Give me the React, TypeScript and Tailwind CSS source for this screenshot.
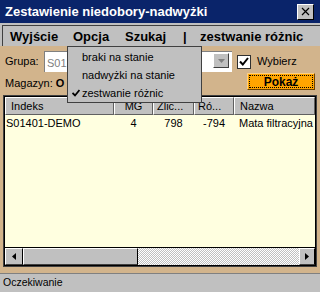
import React from "react";

const cols = [
  { w: "w-[109px]", label: "Indeks", align: "justify-start pl-[5px]" },
  { w: "w-[39px]", label: "MG", align: "justify-center" },
  { w: "w-[41px]", label: "Zlic...", align: "justify-start pl-[3px]" },
  { w: "w-[40px]", label: "Ró...", align: "justify-start pl-[3px]" },
  { w: "flex-1", label: "Nazwa", align: "justify-start pl-[5px]" },
];

export default function App() {
  return (
    <div className="w-[320px] h-[295px] flex flex-col bg-white overflow-hidden relative font-['Liberation_Sans',Arial,sans-serif] text-black">
      {/* Title bar */}
      <div className="h-[23px] shrink-0 bg-[#0a246a] flex items-center pl-[5px] pr-[6px]">
        <span className="flex-1 text-white font-bold text-[13px] leading-none whitespace-nowrap">
          Zestawienie niedobory-nadwyżki
        </span>
        <div className="w-[17px] h-[16px] bg-[#c0c0c0] border border-t-white border-l-white border-r-black border-b-black flex items-center justify-center">
          <svg width="9" height="9" viewBox="0 0 9 9">
            <path d="M1 1 L8 8 M8 1 L1 8" stroke="#000" strokeWidth="1.2" />
          </svg>
        </div>
      </div>

      {/* Menu bar */}
      <div className="h-[23px] shrink-0 bg-[#c0c0c0] pt-[2px] pl-[2px]">
        <div className="h-full border-t border-l border-[#404040] flex items-center text-[13px] font-bold leading-none whitespace-nowrap pl-[7px]">
          <span className="w-[63px]">Wyjście</span>
          <span className="w-[52px]">Opcja</span>
          <span className="w-[58px]">Szukaj</span>
          <span className="w-[17px]">|</span>
          <span>zestwanie różnic</span>
        </div>
      </div>

      {/* Body */}
      <div className="h-[227px] shrink-0 bg-[#d2b48c] flex flex-col px-[3px] text-[11px]">
        {/* Row 1 */}
        <div className="mt-[5px] h-[21px] flex items-center">
          <span className="w-[41px] pl-[2px]">Grupa:</span>
          <div className="w-[188px] h-[21px] bg-white border-l border-t border-[#808080] flex items-start pr-[3px]">
            <span className="flex-1 pl-[2px] pt-[3px] text-[#808080]">S01</span>
            <div className="mt-[1px] w-[16px] h-[15px] bg-[#c0c0c0] border border-t-white border-l-white border-r-[#404040] border-b-[#404040] flex items-center justify-center">
              <svg width="7" height="4" viewBox="0 0 7 4">
                <path d="M0 0 L7 0 L3.5 4 Z" fill="#808080" />
              </svg>
            </div>
          </div>
          <div className="ml-[5px] w-[14px] h-[14px] bg-white border border-[#303030] flex items-center justify-center">
            <svg width="10" height="9" viewBox="0 0 10 9">
              <path d="M1 4.5 L3.8 7.5 L9 1" stroke="#000" strokeWidth="2" fill="none" />
            </svg>
          </div>
          <span className="ml-[6px]">Wybierz</span>
        </div>

        {/* Row 2 */}
        <div className="mt-[1px] h-[17px] flex items-center">
          <span className="pl-[2px] flex-1 mt-[4px]">
            Magazyn: <b className="font-bold">O</b>
          </span>
          <div className="w-[68px] h-[17px] bg-[#ffa500] border border-t-[#ffd080] border-l-[#ffd080] border-r-[#6a4000] border-b-[#6a4000] p-[1px] mr-[2px]">
            <div className="w-full h-full border border-dotted border-black flex items-center justify-center font-bold text-[12px] leading-none">
              Pokaż
            </div>
          </div>
        </div>

        {/* Table */}
        <div className="mt-[5px] h-[172px] border border-[#404040] flex flex-col">
          <div className="flex-1 border border-black flex flex-col bg-[#ffffe0] overflow-hidden">
            <div className="h-[18px] flex shrink-0">
              {cols.map((c) => (
                <div
                  key={c.label}
                  className={`${c.w} h-full bg-[#c0c0c0] border-t border-l border-t-white border-l-white border-r border-b border-r-[#606060] border-b-[#606060] flex items-center ${c.align} whitespace-nowrap overflow-hidden`}
                >
                  {c.label}
                </div>
              ))}
            </div>
            <div className="h-[17px] flex items-center whitespace-nowrap">
              <span className="w-[109px] pl-[1px]">S01401-DEMO</span>
              <span className="w-[39px] text-center">4</span>
              <span className="w-[41px] text-center">798</span>
              <span className="w-[40px] text-center">-794</span>
              <span className="flex-1 pl-[5px] overflow-hidden">Mata filtracyjna</span>
            </div>
            <div className="flex-1" />
            {/* Horizontal scrollbar */}
            <div className="h-[18px] flex shrink-0 border-t border-black">
              <div className="w-[18px] h-full bg-[#c0c0c0] border border-t-white border-l-white border-r-black border-b-[#404040] flex items-center justify-center">
                <svg width="4" height="7" viewBox="0 0 4 7">
                  <path d="M4 0 L0 3.5 L4 7 Z" fill="#000" />
                </svg>
              </div>
              <div className="w-[115px] h-full bg-[#c0c0c0] border border-t-white border-l-white border-r-black border-b-[#404040]" />
              <div className="flex-1 h-full bg-[repeating-conic-gradient(#c0c0c0_0_25%,#ffffff_0_50%)] bg-[length:2px_2px]" />
              <div className="w-[16px] h-full bg-[#c0c0c0] border border-t-white border-l-white border-r-black border-b-[#404040] flex items-center justify-center">
                <svg width="4" height="7" viewBox="0 0 4 7">
                  <path d="M0 0 L4 3.5 L0 7 Z" fill="#000" />
                </svg>
              </div>
            </div>
          </div>
        </div>
      </div>

      {/* Status bar */}
      <div className="h-[19px] shrink-0 bg-[#c0c0c0] border-t border-[#808080] flex items-center pl-[3px] text-[10.5px]">
        Oczekiwanie
      </div>
      <div className="flex-1 bg-white" />

      {/* Dropdown menu overlay */}
      <div className="absolute left-[67px] top-[46px] w-[135px] h-[57px] bg-[#c0c0c0] border border-[#404040] pt-[1px] text-[11px] leading-none">
        <div className="h-[18px] flex items-center pl-[14px]">braki na stanie</div>
        <div className="h-[18px] flex items-center pl-[14px]">nadwyżki na stanie</div>
        <div className="h-[18px] flex items-center relative pl-[14px]">
          <svg className="absolute left-[4px] top-[5px]" width="8" height="8" viewBox="0 0 8 8">
            <path d="M0.5 4 L3 6.5 L7.5 1" stroke="#000" strokeWidth="1.8" fill="none" />
          </svg>
          zestwanie różnic
        </div>
      </div>
    </div>
  );
}
